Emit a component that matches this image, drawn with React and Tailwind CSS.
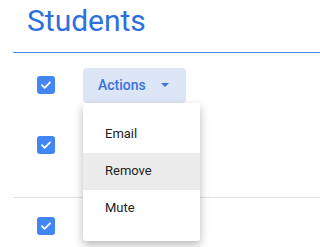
import React from "react";

const Check = () => (
  <span className="flex h-[18px] w-[18px] shrink-0 items-center justify-center rounded-[3px] bg-[#4285f4]">
    <svg width="12" height="12" viewBox="0 0 12 12" fill="none">
      <path d="M2 6.2l2.6 2.6L10 3.4" stroke="white" strokeWidth="1.8" strokeLinecap="round" strokeLinejoin="round" />
    </svg>
  </span>
);

const App = () => {
  return (
    <div className="relative h-[247px] w-[320px] overflow-hidden bg-white font-['Roboto',sans-serif]">
      {/* Header */}
      <div className="ml-[13px] h-[53px] border-b border-[#4285f4] pl-[14px] pt-[1px]">
        <h1 className="text-[30px] leading-[40px] text-[#2d6fe0]">Students</h1>
      </div>

      {/* Row 1 */}
      <div className="flex h-[64px] items-center pl-[37px]">
        <Check />
        <div className="relative ml-[28px]">
          <button className="flex h-[35px] w-[103px] items-center rounded-[4px] bg-[#dde6f6] pl-[15px] text-[14px] font-medium text-[#3a72d8]">
            Actions
            <svg className="ml-[15px]" width="8" height="4" viewBox="0 0 8 4">
              <path d="M0 0h8L4 4z" fill="#3a72d8" />
            </svg>
          </button>

          {/* Dropdown menu */}
          <div className="absolute left-0 top-[35px] z-10 w-[117px] rounded-[3px] bg-white pb-[14px] pt-[13px] shadow-[0_4px_10px_rgba(0,0,0,0.28)]">
            <div className="flex h-[37px] items-center pl-[22px] text-[13px] text-[#222]">Email</div>
            <div className="flex h-[37px] items-center bg-[#ececec] pl-[22px] text-[13px] text-[#222]">Remove</div>
            <div className="flex h-[37px] items-center pl-[22px] text-[13px] text-[#222]">Mute</div>
          </div>
        </div>
      </div>

      {/* Row 2 */}
      <div className="flex h-[80px] items-start pl-[37px] pt-[19px]">
        <Check />
      </div>

      {/* Row 3 */}
      <div className="ml-[13px] border-t border-[#e0e0e0] pl-[24px] pt-[19px]">
        <Check />
      </div>
    </div>
  );
};

export default App;
